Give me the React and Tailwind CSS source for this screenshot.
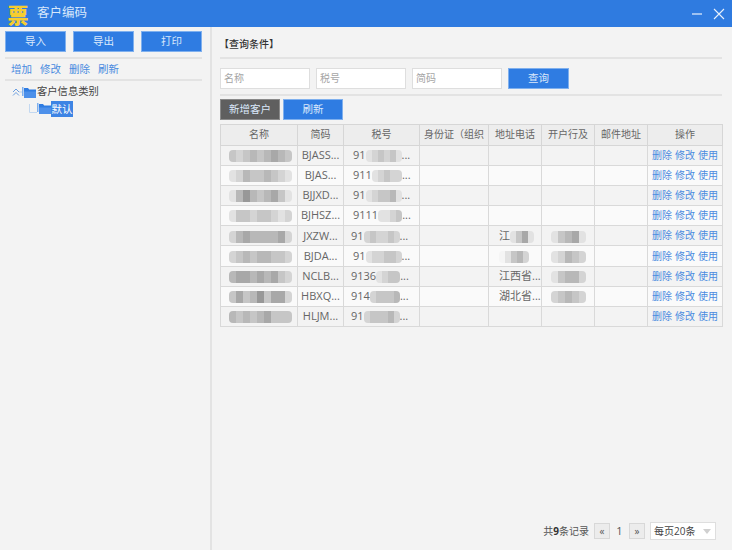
import React from "react";

const rows = [
  { name: [3, 2, 3, 4, 3, 4, 5, 4, 3], code: "BJASS...", tax: "91", taxM: [1, 2, 3, 2, 3, 1], pl: "pl-[9px]" },
  { name: [1, 2, 4, 3, 3, 4, 3, 2, 1], code: "BJAS...", tax: "911", taxM: [1, 2, 3, 2, 2], pl: "pl-[9px]" },
  { name: [1, 4, 6, 4, 3, 4, 5, 3, 1], code: "BJJXD...", tax: "91", taxM: [1, 2, 3, 3, 4, 1], pl: "pl-[9px]" },
  { name: [1, 3, 3, 2, 3, 3, 2, 1, 2], code: "BJHSZ...", tax: "9111", taxM: [1, 1, 2, 3], pl: "pl-[9px]" },
  { name: [2, 4, 5, 4, 4, 4, 4, 5, 2], code: "JXZW...", tax: "91", taxM: [2, 3, 2, 2, 3, 2], pl: "pl-[7px]", addr: "江", addrM: [1, 3, 5, 1], bank: [1, 3, 4, 5, 1] },
  { name: [2, 3, 4, 3, 4, 4, 3, 3, 2], code: "BJDA...", tax: "91", taxM: [1, 2, 2, 3, 3, 2], pl: "pl-[9px]", addr: "", addrM: [0, 1, 3, 4, 2], bank: [1, 2, 4, 3, 2] },
  { name: [4, 5, 5, 4, 5, 4, 5, 3, 2], code: "NCLB...", tax: "9136", taxM: [1, 2, 3, 3], pl: "pl-[7px]", addr: "江西省...", bank: [1, 3, 4, 4, 2] },
  { name: [3, 5, 3, 4, 6, 3, 5, 5, 2], code: "HBXQ...", tax: "914", taxM: [2, 3, 3, 3, 4], pl: "pl-[7px]", addr: "湖北省...", bank: [2, 3, 4, 3, 2] },
  { name: [4, 3, 4, 3, 4, 5, 3, 3, 3], code: "HLJM...", tax: "91", taxM: [2, 3, 3, 3, 4, 2], pl: "pl-[7px]" },
];

const shades = ["#f5f5f5", "#e2e2e2", "#d4d4d4", "#c6c6c6", "#b8b8b8", "#a8a8a8", "#989898"];

function Mosaic({ cells, w = "w-[6px]" }) {
  return (
    <span className="inline-flex h-[12px] align-middle blur-[0.7px] rounded-sm overflow-hidden">
      {cells.map((c, i) => (
        <span key={i} className={`${w} h-full`} style={{ backgroundColor: shades[c] }} />
      ))}
    </span>
  );
}

function Btn({ children, className = "" }) {
  return (
    <button className={`h-[21px] bg-[#2f7ce2] border border-[#7fb0ee] text-[#dbe9fb] text-[10.5px] flex items-center justify-center ${className}`}>
      {children}
    </button>
  );
}

function Folder() {
  return (
    <svg width="14" height="11" viewBox="0 0 14 11" className="shrink-0">
      <path d="M0 0h1.500v9H0z" fill="#7fb0ee" />
      <path d="M2 1h4l1.200 1.500H14V11H2z" fill="#2f7ce2" />
      <path d="M2 4.500h12V11H2z" fill="#4d90ea" />
    </svg>
  );
}

const Th = ({ children, className = "" }) => (
  <th className={`border border-[#d6d6d6] bg-[#ededed] font-normal text-[10px] text-[#666] h-[20.5px] p-0 overflow-hidden whitespace-nowrap ${className}`}>
    {children}
  </th>
);

const Td = ({ children, className = "" }) => (
  <td className={`border border-[#d9d9d9] text-[11px] text-[#666] h-[20.2px] p-0 overflow-hidden whitespace-nowrap ${className}`}>
    {children}
  </td>
);

export default function App() {
  return (
    <div className="w-[732px] h-[550px] overflow-hidden bg-[#f3f3f3] flex flex-col font-['Open_Sans','Noto_Sans_CJK_SC',sans-serif]">
      <header className="h-[27px] shrink-0 bg-[#2f7be0] flex items-center pl-[7px] pr-[7px] text-white">
        <span className="w-[22px] h-[26px] shrink-0 flex items-center justify-center text-[21px] leading-[26px] font-black text-[#f6cd2f] font-['Noto_Sans_CJK_SC',sans-serif]">
          票
        </span>
        <span className="ml-[8px] text-[12.500px] text-[#d8e8fb]">客户编码</span>
        <div className="ml-auto flex items-center gap-[10px]">
          <svg width="12" height="12" viewBox="0 0 12 12">
            <path d="M1 6h10" stroke="#e8f1fc" strokeWidth="1.200" />
          </svg>
          <svg width="12" height="12" viewBox="0 0 12 12">
            <path d="M1 1l10 10M11 1L1 11" stroke="#e8f1fc" strokeWidth="1.100" />
          </svg>
        </div>
      </header>

      <div className="flex flex-1 min-h-0">
        <aside className="w-[212px] shrink-0 border-r-2 border-[#e3e3e3] pt-[4px]">
          <div className="flex gap-[7px] pl-[5px]">
            <Btn className="w-[61px]">导入</Btn>
            <Btn className="w-[61px]">导出</Btn>
            <Btn className="w-[61px]">打印</Btn>
          </div>
          <div className="mt-[5px] ml-[5px] w-[197px] border-t-2 border-[#e3e3e3]" />
          <div className="ml-[11px] mt-[1px] h-[19px] flex items-center gap-[8px] text-[10.500px] text-[#4a8be0]">
            <span>增加</span>
            <span>修改</span>
            <span>删除</span>
            <span>刷新</span>
          </div>
          <div className="ml-[5px] w-[197px] border-t-2 border-[#e3e3e3]" />
          <div className="mt-[3px] pl-[12px] flex items-center h-[16px]">
            <svg width="10" height="10" viewBox="0 0 10 10" className="shrink-0">
              <path d="M1 5l3-3 3 3M1 8.500l3-3 3 3" fill="none" stroke="#6c9fe0" strokeWidth="1" />
              <path d="M7 5h3" stroke="#b5cdea" strokeWidth="1" />
            </svg>
            <Folder />
            <span className="ml-[1px] text-[10.300px] text-[#444]">客户信息类别</span>
          </div>
          <div className="pl-[29px] flex items-center h-[17px]">
            <svg width="8" height="10" viewBox="0 0 8 10" className="shrink-0">
              <path d="M.500 0v8.500H8" fill="none" stroke="#c3d8f0" strokeWidth="1" />
            </svg>
            <Folder />
            <span className="bg-[#3d84e4] text-white text-[10.500px] leading-[16px] px-[0.500px]">默认</span>
          </div>
        </aside>

        <main className="flex-1 min-w-0 pl-[8px] pr-[10px]">
          <div className="h-[32px] flex items-center pt-[4px] text-[10px] text-[#333] font-medium border-b-2 border-[#e3e3e3]">
            <span className="-ml-[1px]">【查询条件】</span>
          </div>
          <div className="flex gap-[6px] mt-[9px]">
            {["名称", "税号", "简码"].map((p) => (
              <div key={p} className="w-[90px] h-[21px] bg-white border border-[#dedede] pl-[3px] flex items-center text-[10px] text-[#a5a5a5]">
                {p}
              </div>
            ))}
            <Btn className="w-[61px]">查询</Btn>
          </div>
          <div className="mt-[5px] border-t-2 border-[#e3e3e3]" />
          <div className="flex gap-[3px] mt-[3px]">
            <Btn className="w-[60px] !bg-[#5f5f5f] !border-[#8a8a8a]">新增客户</Btn>
            <Btn className="w-[60px]">刷新</Btn>
          </div>
          <table className="mt-[4px] w-[502px] table-fixed border-collapse text-center">
            <colgroup>
              <col className="w-[77px]" />
              <col className="w-[46px]" />
              <col className="w-[76px]" />
              <col className="w-[69px]" />
              <col className="w-[53px]" />
              <col className="w-[53px]" />
              <col className="w-[53px]" />
              <col className="w-[75px]" />
            </colgroup>
            <thead>
              <tr>
                <Th>名称</Th>
                <Th>简码</Th>
                <Th>税号</Th>
                <Th className="text-left pl-[4px]">身份证（组织</Th>
                <Th>地址电话</Th>
                <Th>开户行及</Th>
                <Th>邮件地址</Th>
                <Th>操作</Th>
              </tr>
            </thead>
            <tbody>
              {rows.map((r, i) => (
                <tr key={r.code} className={i % 2 === 0 ? "bg-[#f3f3f3]" : "bg-[#fafafa]"}>
                  <Td className="text-left pl-[8px]">
                    <Mosaic cells={r.name} w="w-[7px]" />
                  </Td>
                  <Td className="text-[10.500px]">{r.code}</Td>
                  <Td className={`text-left text-[10.500px] ${r.pl}`}>
                    {r.tax}
                    <Mosaic cells={r.taxM} />
                    <span>...</span>
                  </Td>
                  <Td />
                  <Td className="text-left pl-[10px] text-[10px]">
                    {r.addr}
                    {r.addrM && <Mosaic cells={r.addrM} />}
                  </Td>
                  <Td>{r.bank && <Mosaic cells={r.bank} w="w-[7px]" />}</Td>
                  <Td />
                  <Td className="!text-[#4a8be0] !text-[10px]">
                    <span className="inline-flex gap-[3px]">
                      <span>删除</span>
                      <span>修改</span>
                      <span>使用</span>
                    </span>
                  </Td>
                </tr>
              ))}
            </tbody>
          </table>
          <div className="mt-[195px] flex items-center justify-end pr-[6px] text-[10px] text-[#555] whitespace-nowrap">
            <span>
              共<b className="text-[#333]">9</b>条记录
            </span>
            <span className="ml-[5px] w-[16px] h-[16px] bg-[#ececec] border border-[#d8d8d8] flex items-center justify-center text-[10px] leading-none">
              «
            </span>
            <span className="w-[19px] text-center text-[11px]">1</span>
            <span className="w-[16px] h-[16px] bg-[#ececec] border border-[#d8d8d8] flex items-center justify-center text-[10px] leading-none">
              »
            </span>
            <span className="ml-[5px] w-[66px] h-[18px] bg-white border border-[#dedede] pl-[3px] flex items-center justify-between pr-[4px] text-[#444]">
              每页20条
              <svg width="8" height="5" viewBox="0 0 8 5">
                <path d="M0 0h8L4 5z" fill="#d0d0d0" />
              </svg>
            </span>
          </div>
        </main>
      </div>
    </div>
  );
}
